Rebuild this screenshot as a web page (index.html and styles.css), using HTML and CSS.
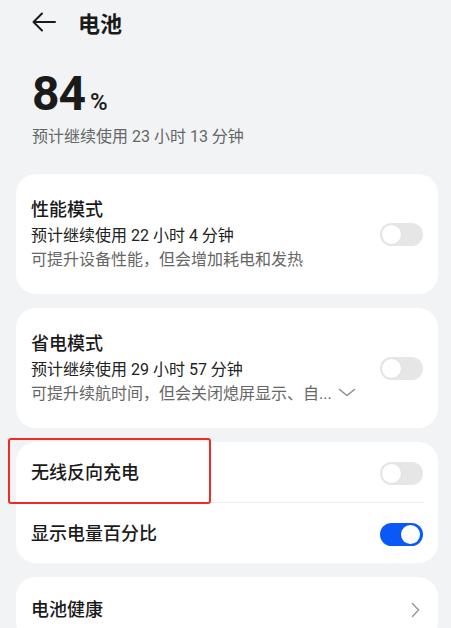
FILE: index.html
```html
<!DOCTYPE html>
<html lang="zh-CN">
<head>
    <meta charset="UTF-8">
    <title>电池</title>
    <link rel="stylesheet" href="styles.css">
</head>
<body>
<div class="page">

    <div class="header">
        <svg class="back" width="24" height="20" viewBox="0 0 24 20">
            <path d="M10 1.5 L1.5 10 L10 18.5 M1.5 10 H23" fill="none" stroke="#1a1a1a" stroke-width="2" stroke-linecap="round" stroke-linejoin="round"/>
        </svg>
        <span class="header_title">电池</span>
    </div>

    <div class="summary">
        <div class="level"><span class="level_num">84</span><span class="level_pct">%</span></div>
        <div class="level_sub">预计继续使用 23 小时 13 分钟</div>
    </div>

    <div class="cards">
        <!--性能模式-->
        <div class="card card_mode">
            <div class="mode_text">
                <div class="item_title">性能模式</div>
                <div class="mode_time">预计继续使用 22 小时 4 分钟</div>
                <div class="mode_desc">可提升设备性能，但会增加耗电和发热</div>
            </div>
            <div class="toggle"><span class="knob"></span></div>
        </div>

        <!--省电模式-->
        <div class="card card_mode">
            <div class="mode_text">
                <div class="item_title">省电模式</div>
                <div class="mode_time">预计继续使用 29 小时 57 分钟</div>
                <div class="mode_desc">可提升续航时间，但会关闭熄屏显示、自...
                    <svg class="more" width="18" height="9" viewBox="0 0 18 9">
                        <path d="M1.5 1.5 L9 7.5 L16.5 1.5" fill="none" stroke="#8c8c8c" stroke-width="1.5" stroke-linecap="round" stroke-linejoin="round"/>
                    </svg>
                </div>
            </div>
            <div class="toggle"><span class="knob"></span></div>
        </div>

        <!--开关列表-->
        <div class="card card_list">
            <div class="mark"></div>
            <div class="row">
                <span class="item_title">无线反向充电</span>
                <div class="toggle"><span class="knob"></span></div>
            </div>
            <div class="divider"></div>
            <div class="row">
                <span class="item_title">显示电量百分比</span>
                <div class="toggle on"><span class="knob"></span></div>
            </div>
        </div>

        <div class="card card_list">
            <div class="row row_link">
                <span class="item_title">电池健康</span>
                <svg class="arrow" width="9" height="16" viewBox="0 0 9 16">
                    <path d="M1.5 1.5 L7.5 8 L1.5 14.5" fill="none" stroke="#9a9a9a" stroke-width="1.5" stroke-linecap="round" stroke-linejoin="round"/>
                </svg>
            </div>
        </div>
    </div>

</div>
</body>
</html>
```

FILE: styles.css
```css
* {
    box-sizing: border-box;
}
body {
    margin: 0;
    background: #f1f3f5;
    font-family: Roboto, "Noto Sans CJK SC", sans-serif;
    color: #1a1a1a;
}
.page {
    height: 628px;
    overflow: hidden;
    padding: 0 13px 0 16px;
}

/*1.顶部标题*/
.header {
    height: 44px;
    display: flex;
    align-items: center;
    gap: 22px;
    padding-left: 16px;
}
.header_title {
    font-size: 22px;
    font-weight: 700;
}

/*2.电量*/
.summary {
    padding: 22px 16px 0;
}
.level {
    height: 56px;
    line-height: 56px;
}
.level_num {
    font-size: 48px;
    font-weight: 700;
    letter-spacing: -1px;
}
.level_pct {
    font-size: 24px;
    font-weight: 500;
    margin-left: 5px;
}
.level_sub {
    margin-top: 4px;
    font-size: 16px;
    line-height: 22px;
    color: #666;
}

/*3.卡片*/
.cards {
    margin-top: 26px;
    display: flex;
    flex-direction: column;
    gap: 14px;
}
.card {
    background: #fff;
    border-radius: 20px;
    padding: 0 15px;
    position: relative;
}
.card_mode {
    display: flex;
    align-items: center;
    padding-top: 23px;
    padding-bottom: 22px;
}
.mode_text {
    flex: 1;
}
.item_title {
    font-size: 18px;
    line-height: 26px;
    font-weight: 500;
    color: #1a1a1a;
}
.mode_time {
    margin-top: 1px;
    font-size: 16px;
    line-height: 24px;
    color: #222;
}
.mode_desc {
    font-size: 16px;
    line-height: 24px;
    color: #666;
}
.more {
    margin-left: 2px;
    vertical-align: 2px;
}

.row {
    height: 60px;
    display: flex;
    align-items: center;
    justify-content: space-between;
    padding-top: 2px;
}
.row_link {
    height: 64px;
}
.arrow {
    margin-right: 3px;
}
.divider {
    height: 1px;
    background: #ebebeb;
    margin-right: -1px;
}

/*开关*/
.toggle {
    width: 43px;
    height: 23px;
    border-radius: 12px;
    background: #e6e6e6;
    padding: 1px;
    display: flex;
    flex-shrink: 0;
}
.knob {
    width: 21px;
    height: 21px;
    border-radius: 50%;
    background: #fff;
    border: 1px solid #e0e0e0;
}
.toggle.on {
    background: #0a59f7;
    justify-content: flex-end;
}
.toggle.on .knob {
    border: none;
    width: 19px;
    height: 19px;
    margin: 1px 2px 1px 0;
}

/*红框标注*/
.mark {
    position: absolute;
    left: -8px;
    top: -4px;
    width: 203px;
    height: 66px;
    border: 2px solid #ee2c25;
    border-radius: 3px;
}
```
